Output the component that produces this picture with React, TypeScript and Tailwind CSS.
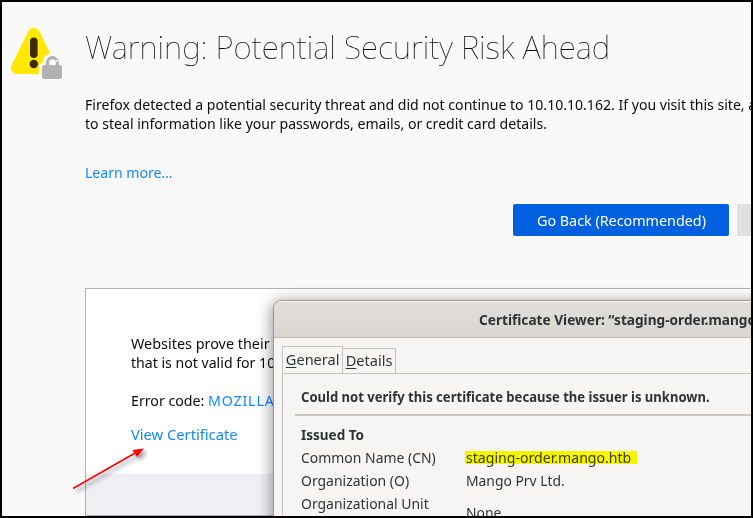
import type { ReactNode } from "react";

function WarningIcon() {
  return (
    <svg width="54" height="54" viewBox="0 0 54 54" className="block">
      <path d="M17.2 3.200C19.500-1 26-1 28.400 3.200L44.700 36.500C46.500 41 43.500 46 39 46H6C1 46-1.200 41 .9 36.500Z" fill="#ffe900" />
      <rect x="19" y="9.500" width="7.600" height="20.500" rx="3.800" fill="#3e2800" />
      <circle cx="22.800" cy="36" r="4.200" fill="#3e2800" />
      <path d="M28 54V38.500Q28 36 31.500 35C33 22.500 47 21.500 50 34L54 38V54Z" fill="#f9f9fa" />
      <rect x="31" y="37" width="20" height="14" rx="2.500" fill="#b1b1b3" />
      <path d="M36.500 38V34.500A4.800 4.800 0 0 1 46.300 34.500V38" fill="none" stroke="#b1b1b3" strokeWidth="3.200" />
      <path d="M42 37L46.500 32" stroke="#f9f9fa" strokeWidth="1.500" />
    </svg>
  );
}

function Row({ label, children }: { label: string; children: ReactNode }) {
  return (
    <div className="flex h-[23px] items-center">
      <div className="w-[165px]"><span className="inline-block origin-left scale-x-[0.93]">{label}</span></div>
      {children}
    </div>
  );
}

function CertificateDialog() {
  return (
    <section className="absolute left-[271px] top-[298px] h-[300px] w-[660px] overflow-hidden rounded-t-[8px] border border-[#999693] bg-[#f6f5f4] text-[15px] text-[#2e3436] shadow-[0_3px_16px_1px_rgba(0,0,0,0.45)]">
      <header className="flex h-[37px] items-center border-b border-[#bfb8b1] bg-linear-to-b from-[#e1dedb] to-[#dad6d2] pl-[205px] font-bold shadow-[inset_0_1px_white]">
        <span className="inline-block origin-left scale-x-[0.91]">Certificate Viewer: “staging-order.mango.htb”</span>
      </header>
      <div className="flex items-end pl-2 pt-2">
        <div className="flex h-[27px] w-[61px] justify-center border border-b-0 border-[#c7c3bc] pt-[2px] leading-[20px]">
          <span className="inline-block h-[20px] scale-x-[0.97]"><span className="underline underline-offset-2">G</span>eneral</span>
        </div>
        <div className="flex h-[25px] w-[53px] justify-center border border-b-0 border-l-0 border-[#c7c3bc] pt-[1px] leading-[20px]">
          <span className="inline-block h-[20px] scale-x-[0.97]"><span className="underline underline-offset-2">D</span>etails</span>
        </div>
      </div>
      <div className="ml-2 h-[240px] border-l border-t border-[#c7c3bc] pl-[18px] pt-[10px]">
        <h2 className="origin-left scale-x-[0.87] font-bold leading-[24px]"><span>Could not verify this certificate because the issuer is unknown.</span></h2>
        <div className="-ml-[6px] mb-[7px] mt-[6px] h-[2px] bg-[#cdc7c2]" />
        <h3 className="h-[23px] origin-left scale-x-[0.9] font-bold leading-[22px]">Issued To</h3>
        <Row label="Common Name (CN)">
          <div className="-ml-px h-[13px] w-[172px] bg-[#f5f500] pl-px leading-[13px] text-[#3b3d00]"><span className="inline-block origin-left scale-x-[0.94]">staging-order.mango.htb</span></div>
        </Row>
        <Row label="Organization (O)"><span className="origin-left scale-x-[0.925]">Mango Prv Ltd.</span></Row>
        <Row label="Organizational Unit"><span className="relative top-[9px] origin-left scale-x-[0.925]">None</span></Row>
      </div>
    </section>
  );
}

export default function App() {
  return (
    <main className="relative h-[518px] w-[753px] overflow-hidden border-2 border-black bg-[#f9f9fa] font-['Noto_Sans',sans-serif] text-[15px] leading-[19px] whitespace-nowrap text-[#0c0c0d]">
      <div className="flex h-full">
        <div className="w-[83px] shrink-0 pl-[9px] pt-[26px]"><WarningIcon /></div>
        <div className="flex w-[900px] shrink-0 flex-col">
          <h1 className="mt-[20px] h-[50px] origin-left scale-x-[0.983] text-[32px] font-thin leading-[50px]">Warning: Potential Security Risk Ahead</h1>
          <div className="mt-[23px] origin-left scale-x-[0.938]">
            <p>Firefox detected a potential security threat and did not continue to 10.10.10.162. If you visit this site, attackers could try</p>
            <p>to steal information like your passwords, emails, or credit card details.</p>
            <a className="mt-[30px] block text-[#1488ff]">Learn more…</a>
          </div>
          <div className="ml-[428px] mt-[22px] flex gap-2">
            <button className="h-8 w-[216px] rounded-[2px] bg-[#0060df] text-white"><span className="inline-block scale-x-[0.955]">Go Back (Recommended)</span></button>
            <button className="h-8 w-[130px] rounded-[2px] bg-[#e0e0e1]" />
          </div>
          <section className="mt-[52px] flex h-[300px] flex-col border border-[#b1b1b3] bg-white">
            <div className="flex h-[185px] flex-col pl-[45px] pt-[45px]">
              <p className="origin-left scale-x-[0.96]">Websites prove their identity via certificates.</p>
              <p className="origin-left scale-x-[0.94]">that is not valid for 10.10.10.162.</p>
              <p className="mt-[19px] origin-left scale-x-[0.945]">Error code: <a className="tracking-[0.9px] text-[#1488ff]">MOZILLA_PKIX_ERROR</a></p>
              <a className="mt-[15px] origin-left scale-x-[0.98] text-[#1488ff]">View Certificate</a>
            </div>
            <div className="flex-1 bg-[#f0f0f4]" />
          </section>
        </div>
      </div>
      <CertificateDialog />
      <svg className="absolute left-[66px] top-[440px] drop-shadow-[3px_3px_2px_rgba(0,0,0,0.45)]" width="90" height="60" viewBox="0 0 90 60">
        <path d="M5 46.500L68 10.500" stroke="red" strokeWidth="1.500" />
        <path d="M76 6.500L64.500 8L69 15Z" fill="red" />
      </svg>
    </main>
  );
}
